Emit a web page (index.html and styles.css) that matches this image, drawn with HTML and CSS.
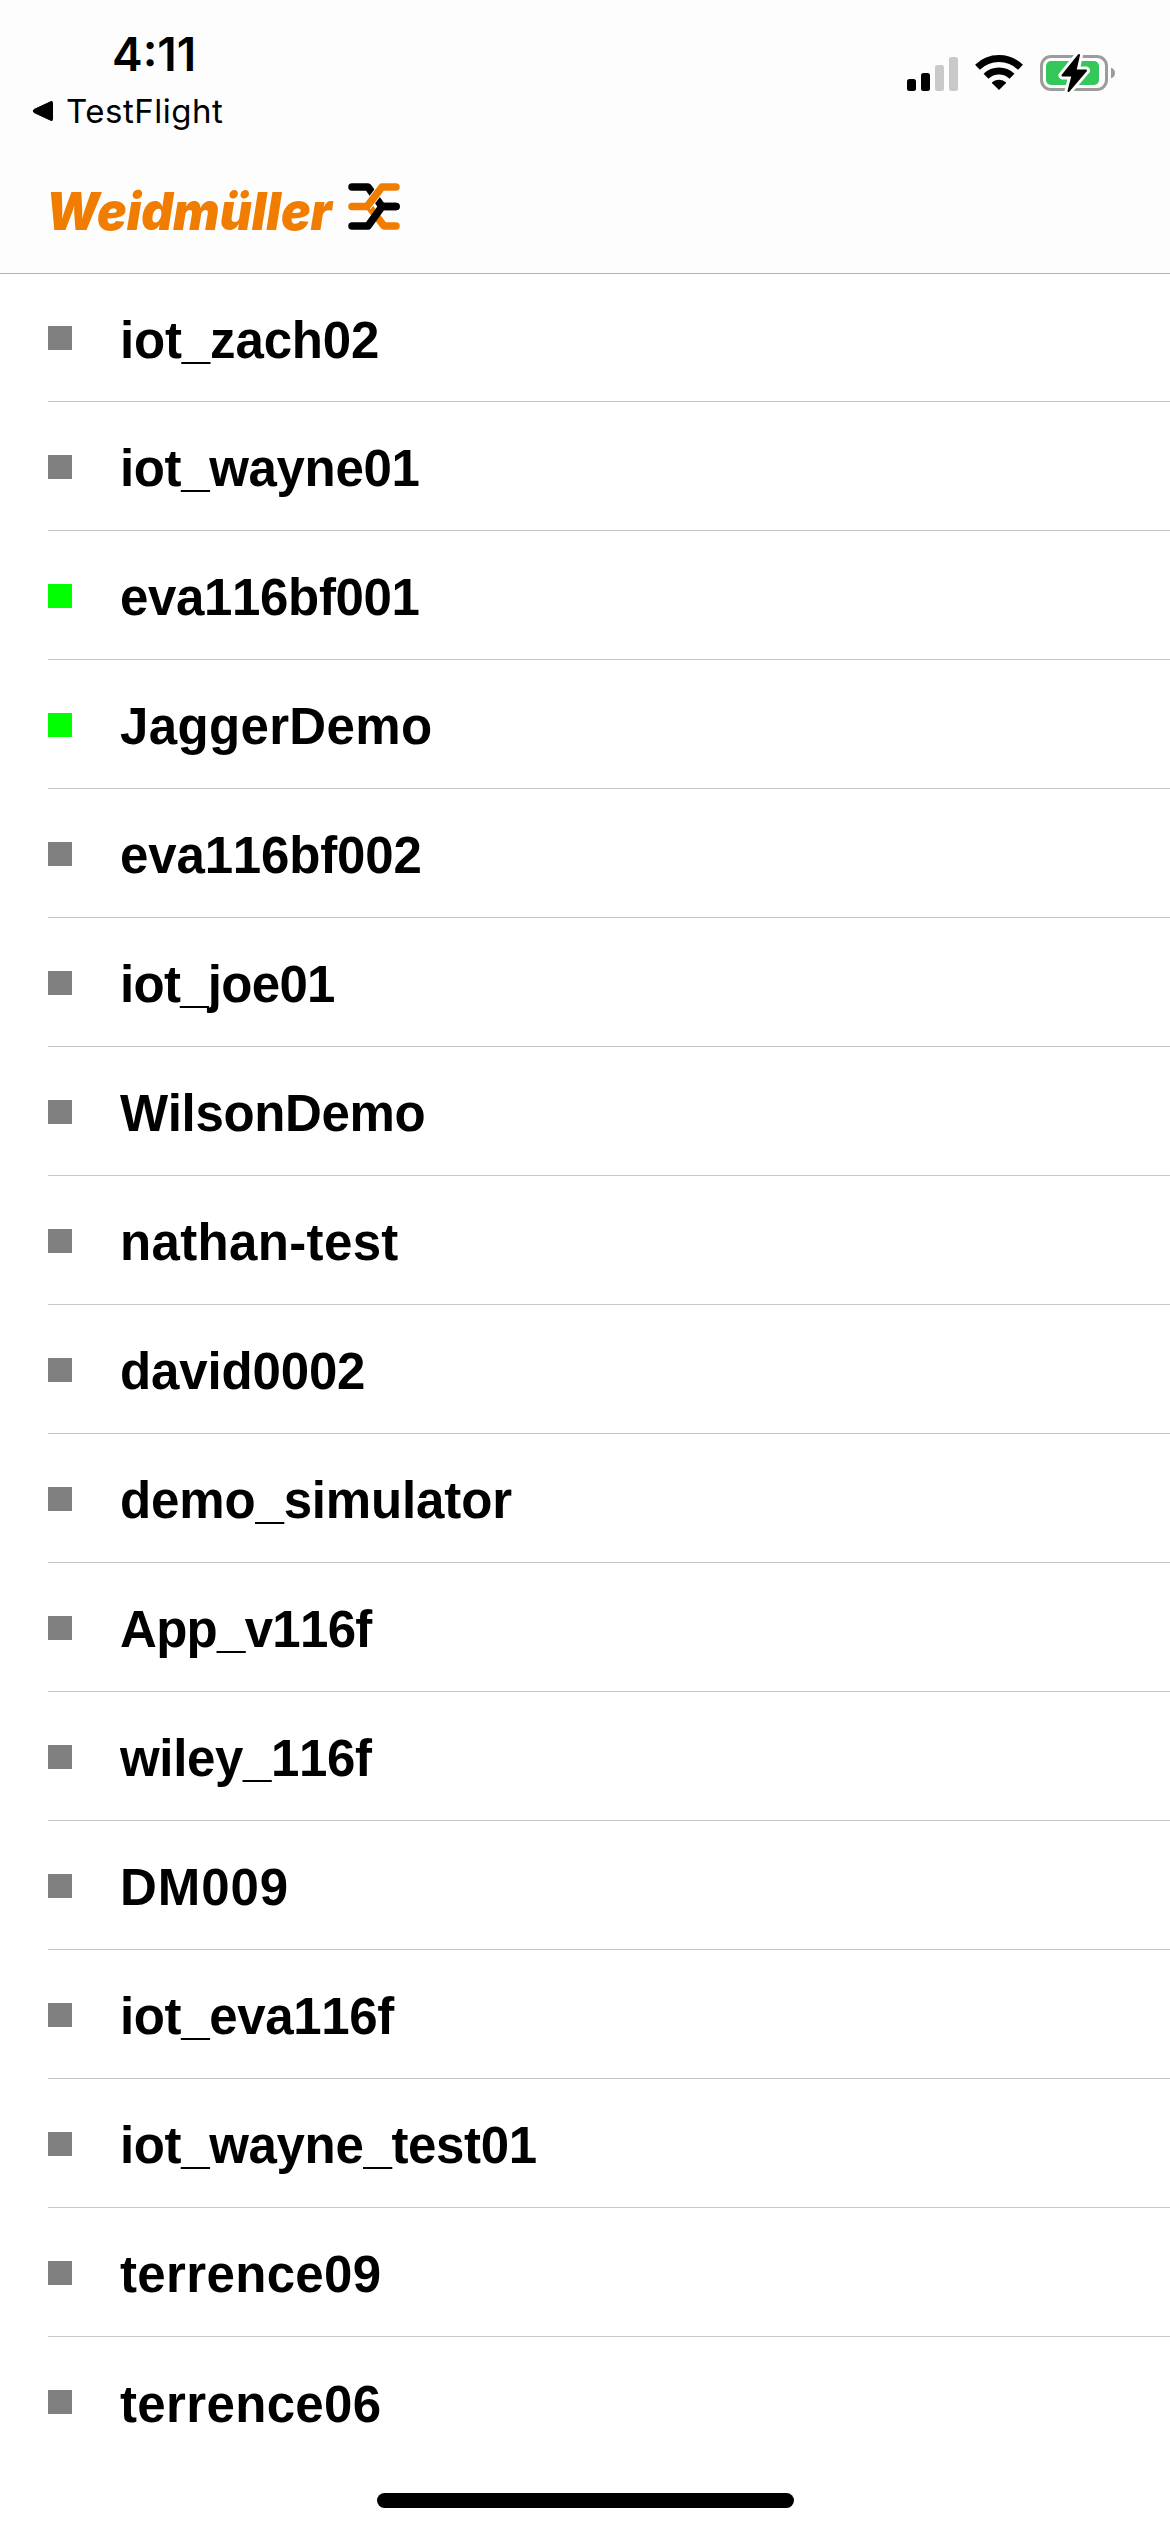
FILE: index.html
```html
<!DOCTYPE html>
<html lang="en">
<head>
<meta charset="utf-8">
<title>Weidmüller devices</title>
<link rel="stylesheet" href="styles.css">
</head>
<body>
<div class="screen">
<header class="header">
  <div class="status">
    <div class="status-left">
      <div class="time">4:11</div>
      <div class="back">
        <svg width="22" height="22" viewBox="0 0 22 22"><path d="M2 9.5 19 1.6Q20.500 1 20.500 2.600V19.400Q20.500 21 19 20.400L2 12.500Q.4 11 2 9.500Z" stroke="#000" stroke-width="1"/></svg>
        <span>TestFlight</span>
      </div>
    </div>
    <div class="status-icons">
      <svg width="51" height="34" viewBox="0 0 51 34">
        <rect x="0" y="22" width="9" height="12" rx="2.500"/>
        <rect x="14" y="16" width="9" height="18" rx="2.500"/>
        <g fill="#c9c9c9"><rect x="28" y="8" width="9" height="26" rx="2.500"/><rect x="42" y="0" width="9" height="34" rx="2.500"/></g>
      </svg>
      <svg width="48" height="36" viewBox="0 0 48 36">
        <g fill="none" stroke="#000" stroke-width="7"><path d="M2.500 13.200A31 31 0 0 1 45.500 13.200"/><path d="M11 22.300A18.500 18.500 0 0 1 37 22.300"/></g>
        <path d="M24 36 17.200 29.200Q16.600 28.500 17.400 27.900 24 23.500 30.600 27.900 31.400 28.500 30.800 29.200Z"/>
      </svg>
      <svg width="75" height="40" viewBox="0 0 75 40">
        <rect x="1.500" y="3.500" width="65" height="33" rx="9.500" fill="none" stroke="#9c9c9c" stroke-width="3"/>
        <path d="M71 14.500Q75 16 75 20T71 25.500Z" fill="#9c9c9c"/>
        <rect x="6" y="8" width="53" height="24" rx="5" fill="#34c759"/>
        <path d="M39 2 22.500 22.500H32.500L28.500 38 46 17.500H35.500Z" fill="#000" stroke="#fdfdfd" stroke-width="8" stroke-linejoin="round"/>
        <path d="M39 2 22.500 22.500H32.500L28.500 38 46 17.500H35.500Z" stroke="#000" stroke-width="2" stroke-linejoin="round"/>
      </svg>
    </div>
  </div>
  <div class="brand">
    <svg width="290" height="60" viewBox="0 0 290 60"><text class="wordmark" x="1" y="47" textLength="286" lengthAdjust="spacingAndGlyphs">Weidmüller</text></svg>
    <svg width="52" height="47" viewBox="0 0 52 47">
      <g fill="none" stroke-width="7.500" stroke-linecap="round" stroke-linejoin="round">
        <path d="M48 43H36L21 23.500" stroke="#f07d00"/>
        <path d="M4 4H20L34 23.500H48" stroke="#000"/>
        <path d="M37 4H34L19 23.500" stroke="#fdfdfd" stroke-width="9" stroke-linecap="butt"/>
        <path d="M48 4H34L19 23.500H4" stroke="#f07d00"/>
        <path d="M4 43H20L34 23.500H48" stroke="#000"/>
      </g>
    </svg>
  </div>
</header>
<ul class="devices">
  <li class="mid"><i class="state"></i><span>iot_zach02</span></li>
  <li><i class="state"></i><span>iot_wayne01</span></li>
  <li><i class="state online"></i><span>eva116bf001</span></li>
  <li class="wide"><i class="state online"></i><span>JaggerDemo</span></li>
  <li class="mid"><i class="state"></i><span>eva116bf002</span></li>
  <li class="tight"><i class="state"></i><span>iot_joe01</span></li>
  <li><i class="state"></i><span>WilsonDemo</span></li>
  <li class="wide"><i class="state"></i><span>nathan-test</span></li>
  <li class="mid"><i class="state"></i><span>david0002</span></li>
  <li class="mid"><i class="state"></i><span>demo_simulator</span></li>
  <li class="tight"><i class="state"></i><span>App_v116f</span></li>
  <li><i class="state"></i><span>wiley_116f</span></li>
  <li class="wider"><i class="state"></i><span>DM009</span></li>
  <li><i class="state"></i><span>iot_eva116f</span></li>
  <li><i class="state"></i><span>iot_wayne_test01</span></li>
  <li class="wide"><i class="state"></i><span>terrence09</span></li>
  <li class="wide"><i class="state"></i><span>terrence06</span></li>
</ul>
<div class="home-indicator"></div>
</div>
</body>
</html>
```
FILE: styles.css
```css
* { box-sizing: border-box; }
body { margin: 0; background: #fff; color: #000; }
svg { display: block; flex: none; overflow: visible; }
.screen {
  width: 1170px;
  height: 2532px;
  display: flex;
  flex-direction: column;
  align-items: center;
}
.header {
  width: 100%;
  height: 274px;
  flex: none;
  background: #fdfdfd;
  border-bottom: 1px solid #b2b2b2;
}
.status {
  height: 183px;
  display: flex;
  justify-content: space-between;
  align-items: flex-start;
  padding: 26px 55px 0 32px;
  font-family: Inter, sans-serif;
}
.time {
  padding-left: 80px;
  font-size: 46px;
  line-height: 56px;
  font-weight: 600;
}
.back {
  display: flex;
  align-items: center;
  gap: 12px;
  height: 40px;
  margin-top: 9px;
  font-size: 33px;
  line-height: 40px;
  letter-spacing: 0.5px;
}
.status-icons {
  display: flex;
  align-items: center;
  gap: 17px;
  padding-top: 27px;
}
.status-icons svg:first-child { margin-top: 2px; }
.status-icons svg:nth-child(2) { margin-top: -2px; }
.brand {
  display: flex;
  gap: 13px;
  padding-left: 45px;
}
.wordmark {
  font: italic 900 52px Inter, sans-serif;
  fill: #f07d00;
}
.devices {
  width: 100%;
  margin: 0;
  padding: 0 0 0 48px;
  list-style: none;
  font: bold 51px "Liberation Sans", Arial, sans-serif;
  letter-spacing: -0.35px;
  font-kerning: none;
}
.devices li {
  height: 129px;
  display: flex;
  align-items: center;
  gap: 48px;
  padding-top: 1px;
  border-bottom: 1px solid #c6c6c8;
}
.devices li:first-child { height: 128px; }
.devices li:last-child { border-bottom: 0; }
.devices span { line-height: 58px; padding-top: 5px; }
.devices .tight { letter-spacing: -0.7px; }
.devices .mid { letter-spacing: -0.15px; }
.devices .wide { letter-spacing: 0.35px; }
.devices .wider { letter-spacing: 0.95px; }
.state {
  width: 24px;
  height: 24px;
  background: #808080;
}
.state.online { background: #0f0; }
.home-indicator {
  width: 417px;
  height: 15px;
  margin-top: 27px;
  border-radius: 8px;
  background: #000;
}
```
